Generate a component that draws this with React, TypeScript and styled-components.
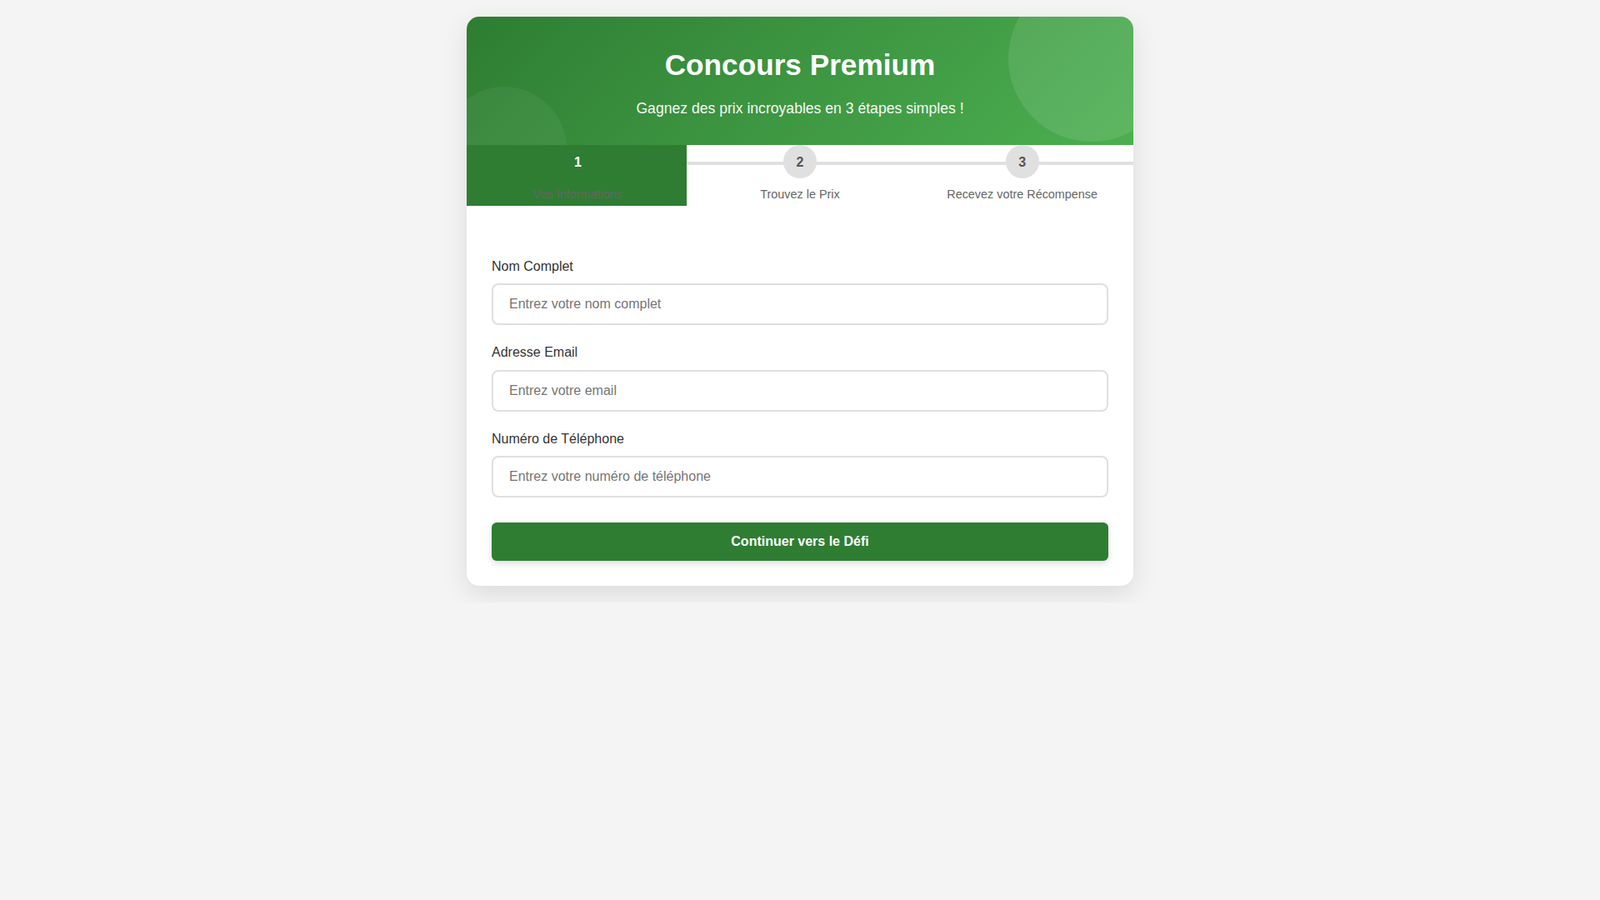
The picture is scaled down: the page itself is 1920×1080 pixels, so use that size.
import styled, { createGlobalStyle } from "styled-components";

const GlobalStyle = createGlobalStyle`
  * {
    box-sizing: border-box;
  }
  body {
    margin: 0;
    padding: 20px;
    background-color: #f4f4f4;
    font-family: "Liberation Sans", Arial, sans-serif;
    line-height: 1.6;
    color: #333;
  }
`;

const Card = styled.div`
  max-width: 800px;
  margin: 0 auto;
  background-color: white;
  border-radius: 15px;
  box-shadow: 0 10px 30px rgba(0, 0, 0, 0.1);
  overflow: hidden;
`;

const Header = styled.header`
  position: relative;
  overflow: hidden;
  padding: 30px 20px;
  text-align: center;
  color: white;
  background: linear-gradient(135deg, #2e7d32, #4caf50);
  &::before {
    content: "";
    position: absolute;
    width: 200px;
    height: 200px;
    top: -50px;
    right: -50px;
    border-radius: 50%;
    background-color: rgba(255, 255, 255, 0.1);
  }
  &::after {
    content: "";
    position: absolute;
    width: 150px;
    height: 150px;
    bottom: -80px;
    left: -30px;
    border-radius: 50%;
    background-color: rgba(255, 255, 255, 0.05);
  }
`;

const Title = styled.h1`
  position: relative;
  margin: 0 0 10px;
  font-size: 35.2px;
  font-weight: bold;
`;

const Subtitle = styled.p`
  position: relative;
  margin: 0;
  font-size: 17.6px;
  opacity: 0.95;
`;

const Steps = styled.div`
  display: grid;
  grid-template-columns: repeat(3, minmax(0, 1fr));
`;

// grey track behind the circles; the active step covers it with its fill
const track = "linear-gradient(#e0e0e0, #e0e0e0) no-repeat 0 20px / 100% 4px";

const Step = styled.div<{ $active?: boolean }>`
  display: flex;
  flex-direction: column;
  align-items: center;
  padding-bottom: 1px;
  background: ${(p) =>
    p.$active
      ? `linear-gradient(90deg, #2e7d32 calc(100% - 3px), transparent calc(100% - 3px)), ${track}`
      : track};
`;

const StepNumber = styled.div<{ $active?: boolean }>`
  width: 40px;
  height: 40px;
  margin-bottom: 8px;
  border-radius: 50%;
  display: flex;
  align-items: center;
  justify-content: center;
  font-size: 16px;
  font-weight: bold;
  background-color: ${(p) => (p.$active ? "#2e7d32" : "#e0e0e0")};
  color: ${(p) => (p.$active ? "white" : "#555")};
`;

const StepLabel = styled.div`
  font-size: 14.4px;
  color: #666;
`;

const Form = styled.form`
  padding: 60px 30px 30px;
`;

const Group = styled.div`
  margin-bottom: 20px;
`;

const Label = styled.label`
  display: block;
  margin-bottom: 8px;
  font-size: 16px;
  color: #333;
`;

const Input = styled.input`
  display: block;
  width: 100%;
  padding: 13px 19px;
  border: 2px solid #e0e0e0;
  border-radius: 8px;
  font-family: inherit;
  font-size: 16px;
  line-height: 20px;
  color: #333;
  outline: none;
  &::placeholder {
    color: #757575;
  }
`;

const Button = styled.button`
  display: block;
  width: 100%;
  margin-top: 30px;
  padding: 14px;
  border: none;
  border-radius: 6px;
  background-color: #2e7d32;
  color: white;
  font-family: inherit;
  font-size: 16px;
  font-weight: bold;
  line-height: 18px;
  cursor: pointer;
  box-shadow: 0 4px 8px rgba(0, 0, 0, 0.12);
`;

const steps = ["Vos Informations", "Trouvez le Prix", "Recevez votre Récompense"];

const fields = [
  { id: "name", label: "Nom Complet", type: "text", placeholder: "Entrez votre nom complet" },
  { id: "email", label: "Adresse Email", type: "email", placeholder: "Entrez votre email" },
  { id: "phone", label: "Numéro de Téléphone", type: "tel", placeholder: "Entrez votre numéro de téléphone" },
];

const App = () => {
  return (
    <>
      <GlobalStyle />
      <Card>
        <Header>
          <Title>Concours Premium</Title>
          <Subtitle>Gagnez des prix incroyables en 3 étapes simples !</Subtitle>
        </Header>
        <Steps>
          {steps.map((label, i) => (
            <Step key={label} $active={i === 0}>
              <StepNumber $active={i === 0}>{i + 1}</StepNumber>
              <StepLabel>{label}</StepLabel>
            </Step>
          ))}
        </Steps>
        <Form onSubmit={(e) => e.preventDefault()}>
          {fields.map((f) => (
            <Group key={f.id}>
              <Label htmlFor={f.id}>{f.label}</Label>
              <Input id={f.id} type={f.type} placeholder={f.placeholder} />
            </Group>
          ))}
          <Button type="submit">Continuer vers le Défi</Button>
        </Form>
      </Card>
    </>
  );
};

export default App;
